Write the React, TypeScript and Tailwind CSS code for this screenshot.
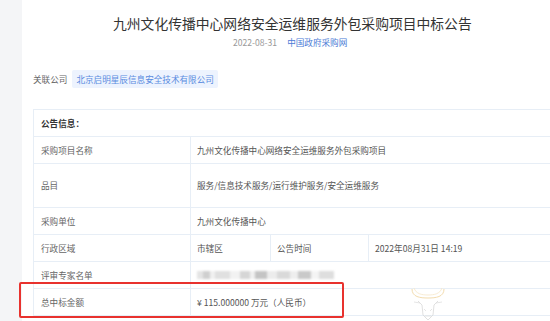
const font = { fontFamily: '"Noto Sans CJK SC", "Noto Sans", sans-serif' };

const Row = ({ label, children, tall }: { label: string; children: React.ReactNode; tall?: boolean }) => (
  <div className={`grid grid-cols-[157px_1fr] border-b border-[#e7eef6] ${tall ? "h-[44px]" : "h-[27px]"}`}>
    <div className="flex items-center border-r border-[#e7eef6] pl-[7px] text-[#666]">{label}</div>
    <div className="flex items-center pl-[6px] text-[#555]">{children}</div>
  </div>
);

const blurBlocks = [
  { w: 6, c: "bg-[#e4e4e4]" },
  { w: 7, c: "bg-[#cfcfcf]" },
  { w: 5, c: "bg-[#f0f0f0]" },
  { w: 15, c: "bg-[#e0e0e0]" },
  { w: 10, c: "bg-[#f2f2f2]" },
  { w: 10, c: "bg-[#d6d6d6]" },
  { w: 5, c: "bg-[#f0f0f0]" },
  { w: 12, c: "bg-[#c4c4c4]" },
  { w: 10, c: "bg-[#ececec]" },
  { w: 13, c: "bg-[#d9d9d9]" },
  { w: 8, c: "bg-[#eeeeee]" },
  { w: 13, c: "bg-[#c9c9c9]" },
  { w: 8, c: "bg-[#f4f4f4]" },
  { w: 15, c: "bg-[#dedede]" },
];

export default function App() {
  return (
    <div className="relative flex h-[321px] w-[550px] overflow-hidden bg-white" style={font}>
      <div className="w-[22px] shrink-0 bg-[#f4f5f7]" />
      <div className="flex-1 pl-[11px]">
        <div className="pt-[12px] pl-[80px] text-[13.8px] leading-[22px] text-[#333]">
          九州文化传播中心网络安全运维服务外包采购项目中标公告
        </div>
        <div className="mt-[1px] flex items-center pl-[200px] text-[8.6px] leading-[14px]">
          <span className="text-[#999]">2022-08-31</span>
          <span className="ml-[10px] text-[#4b7bd6]">中国政府采购网</span>
        </div>
        <div className="mt-[21px] flex items-center text-[8.6px]">
          <span className="text-[#666]">关联公司</span>
          <span className="ml-[5px] flex h-[18px] items-center rounded-[2px] bg-[#edf3fe] px-[4px] text-[#5a8be0]">
            北京启明星辰信息安全技术有限公司
          </span>
        </div>
        <div className="mt-[21px] w-[540px] border-l border-t border-[#e7eef6] text-[8.6px]">
          <div className="flex h-[27px] items-center border-b border-[#e7eef6] pl-[7px] font-bold text-[#333]">
            公告信息：
          </div>
          <Row label="采购项目名称">九州文化传播中心网络安全运维服务外包采购项目</Row>
          <Row label="品目" tall>
            服务/信息技术服务/运行维护服务/安全运维服务
          </Row>
          <Row label="采购单位">九州文化传播中心</Row>
          <div className="grid h-[27px] grid-cols-[157px_80px_98px_1fr] border-b border-[#e7eef6] text-[#555]">
            <div className="flex items-center border-r border-[#e7eef6] pl-[7px] text-[#666]">行政区域</div>
            <div className="flex items-center border-r border-[#e7eef6] pl-[6px]">市辖区</div>
            <div className="flex items-center border-r border-[#e7eef6] pl-[6px]">公告时间</div>
            <div className="flex items-center pl-[6px]">2022年08月31日 14:19</div>
          </div>
          <Row label="评审专家名单">
            <div className="flex h-[8px] blur-[1px]">
              {blurBlocks.map((b, i) => (
                <span key={i} className={`h-full ${b.c}`} style={{ width: b.w }} />
              ))}
            </div>
          </Row>
          <Row label="总中标金额">¥ 115.000000 万元（人民币）</Row>
        </div>
      </div>

      <div className="absolute left-[19px] top-[282px] h-[36px] w-[325px] rounded-[2px] border-2 border-[#e8322e]" />

      <svg className="absolute left-[408px] top-[285px]" width="40" height="36" viewBox="0 0 40 36" fill="none">
        <path d="M4 4 C4 12 12 13 20 13 C28 13 36 12 36 4" stroke="#f3dcae" strokeWidth="1" />
        <path d="M6 3 C8 9 14 10 20 10 C26 10 32 9 34 3" stroke="#f6e6c6" strokeWidth="0.8" />
        <path d="M10 16 L14 20 L15 30 L20 35 L25 30 L26 20 L30 16" stroke="#d8d8d8" strokeWidth="0.8" />
        <path d="M6 17 L12 18 M34 17 L28 18 M16 24 L18 26 M24 24 L22 26 M17 31 L23 31" stroke="#dedede" strokeWidth="0.8" />
      </svg>
    </div>
  );
}
